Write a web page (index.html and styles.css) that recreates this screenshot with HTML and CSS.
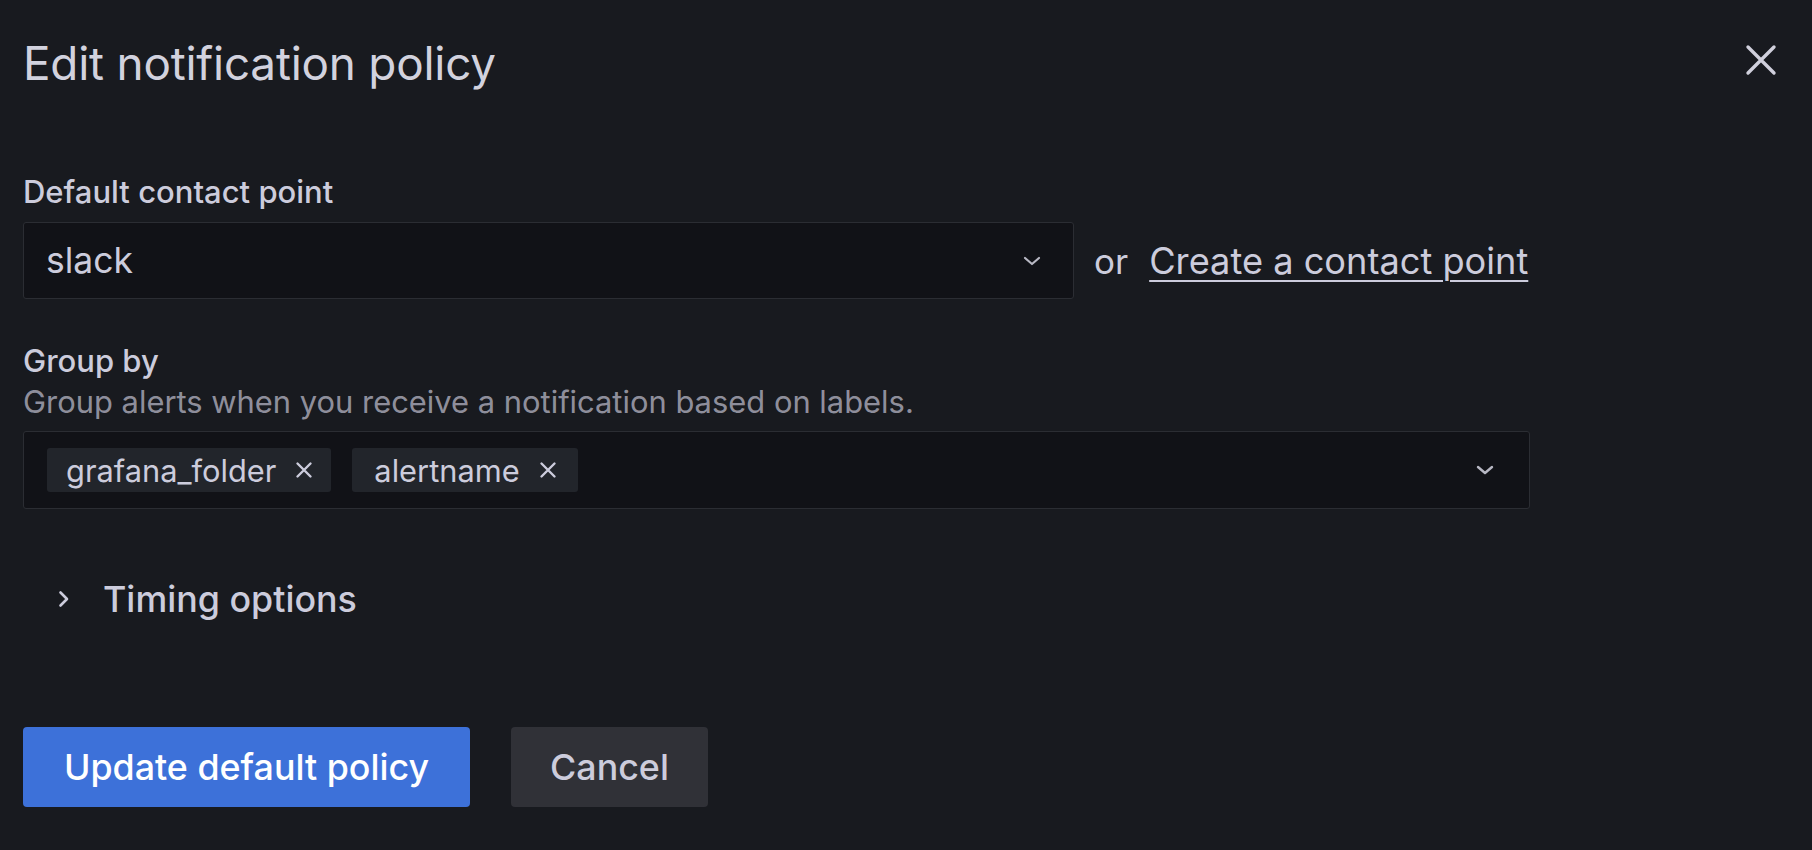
FILE: index.html
```html
<!DOCTYPE html>
<html lang="en">
<head>
<meta charset="utf-8">
<title>Edit notification policy</title>
<link rel="stylesheet" href="styles.css">
</head>
<body>
<div class="drawer">
  <header class="header">
    <h3 class="title">Edit notification policy</h3>
    <button class="close" aria-label="Close">
      <svg width="32" height="32" viewBox="0 0 32 32"><path d="M3 3 L29 29 M29 3 L3 29" stroke="#d0d0dc" stroke-width="3.4" stroke-linecap="round" fill="none"/></svg>
    </button>
  </header>
  <form class="form">
    <div class="field">
      <label class="label">Default contact point</label>
      <div class="row">
        <div class="select contact">
          <span class="value">slack</span>
          <svg class="chev" width="20" height="10" viewBox="0 0 20 10"><path d="M3 2 L10 8 L17 2" stroke="#b8b8c4" stroke-width="2.2" stroke-linecap="round" stroke-linejoin="round" fill="none"/></svg>
        </div>
        <span class="or">or</span>
        <a class="link" href="#">Create a contact point</a>
      </div>
    </div>
    <div class="field group">
      <label class="label">Group by</label>
      <div class="desc">Group alerts when you receive a notification based on labels.</div>
      <div class="select multi">
        <div class="chips">
          <span class="chip">grafana_folder<svg class="x" width="18" height="18" viewBox="0 0 18 18"><path d="M2.5 2.5 L15.5 15.5 M15.5 2.5 L2.5 15.5" stroke="#ccccdc" stroke-width="2.4" stroke-linecap="round" fill="none"/></svg></span>
          <span class="chip">alertname<svg class="x" width="18" height="18" viewBox="0 0 18 18"><path d="M2.5 2.5 L15.5 15.5 M15.5 2.5 L2.5 15.5" stroke="#ccccdc" stroke-width="2.4" stroke-linecap="round" fill="none"/></svg></span>
        </div>
        <svg class="chev" width="20" height="10" viewBox="0 0 20 10"><path d="M3 2 L10 8 L17 2" stroke="#b8b8c4" stroke-width="2.4" stroke-linecap="round" stroke-linejoin="round" fill="none"/></svg>
      </div>
    </div>
    <div class="timing">
      <svg class="caret" width="12" height="18" viewBox="0 0 12 18"><path d="M2.5 2.5 L9 9 L2.5 15.5" stroke="#ccccdc" stroke-width="2.6" stroke-linecap="round" stroke-linejoin="round" fill="none"/></svg>
      <span class="timing-text">Timing options</span>
    </div>
    <div class="actions">
      <button type="button" class="btn primary">Update default policy</button>
      <button type="button" class="btn secondary">Cancel</button>
    </div>
  </form>
</div>
</body>
</html>
```

FILE: styles.css
```css
* { box-sizing: border-box; }
html, body {
  margin: 0;
  padding: 0;
  background: #181a1f;
  width: 1812px;
  height: 850px;
  overflow: hidden;
}
body {
  font-family: Inter, "Noto Sans", sans-serif;
  color: #ccccdc;
}
.drawer {
  padding: 0 35px 0 23px;
}
.header {
  display: flex;
  justify-content: space-between;
  align-items: center;
  padding-top: 37px;
  height: 91px;
}
.title {
  margin: 0;
  font-size: 45.8px;
  font-weight: 400;
  line-height: 54px;
  color: #d2d2de;
  letter-spacing: -0.2px;
}
.close {
  background: none;
  border: 0;
  padding: 0;
  width: 32px;
  height: 32px;
  margin-top: -8px;
  display: flex;
}
.form {
  display: flex;
  flex-direction: column;
  padding-top: 82px;
}
.label {
  display: block;
  font-size: 31px;
  font-weight: 500;
  line-height: 38px;
  color: #ccccdc;
}
.row {
  display: flex;
  align-items: center;
  margin-top: 11px;
}
.select {
  display: flex;
  align-items: center;
  justify-content: space-between;
  background: #111217;
  border: 1.5px solid #2b2d33;
  border-radius: 3px;
}
.contact {
  width: 1051px;
  height: 77px;
  padding: 0 31px 0 22px;
}
.value {
  font-size: 35.5px;
  line-height: 40px;
  color: #ccccdc;
}
.or {
  font-size: 35px;
  margin-left: 20px;
  margin-right: 21px;
  color: #ccccdc;
}
.link {
  font-size: 36.2px;
  color: #ccccdc;
  text-decoration: underline;
  text-underline-offset: 6px;
  text-decoration-thickness: 2px;
}
.group {
  margin-top: 43px;
}
.desc {
  font-size: 30.9px;
  line-height: 36px;
  margin-top: 4px;
  color: rgba(204, 204, 220, 0.68);
}
.multi {
  margin-top: 11px;
  width: 1507px;
  height: 78px;
  padding: 0 34px 0 23px;
}
.chips {
  display: flex;
  gap: 21px;
}
.chip {
  display: flex;
  align-items: center;
  gap: 19px;
  height: 44px;
  padding: 0 18px 0 19px;
  background: #22252b;
  border-radius: 3px;
  font-size: 30.8px;
  color: #ccccdc;
}
.chip + .chip {
  padding-left: 22px;
  padding-right: 21px;
}
.timing {
  display: flex;
  align-items: center;
  margin-top: 70px;
  padding-left: 35px;
  height: 40px;
}
.caret {
  margin-right: 33px;
}
.timing-text {
  font-size: 35.8px;
  font-weight: 500;
  line-height: 40px;
}
.actions {
  display: flex;
  gap: 41px;
  margin-top: 108px;
}
.btn {
  height: 80px;
  border: 0;
  border-radius: 4px;
  font-family: Inter, "Noto Sans", sans-serif;
  font-size: 35.8px;
  font-weight: 500;
  padding: 0 38px;
  cursor: pointer;
}
.primary {
  background: #3d71d9;
  color: #ffffff;
  width: 447px;
}
.secondary {
  background: #303137;
  color: #ccccdc;
  width: 197px;
}
```
